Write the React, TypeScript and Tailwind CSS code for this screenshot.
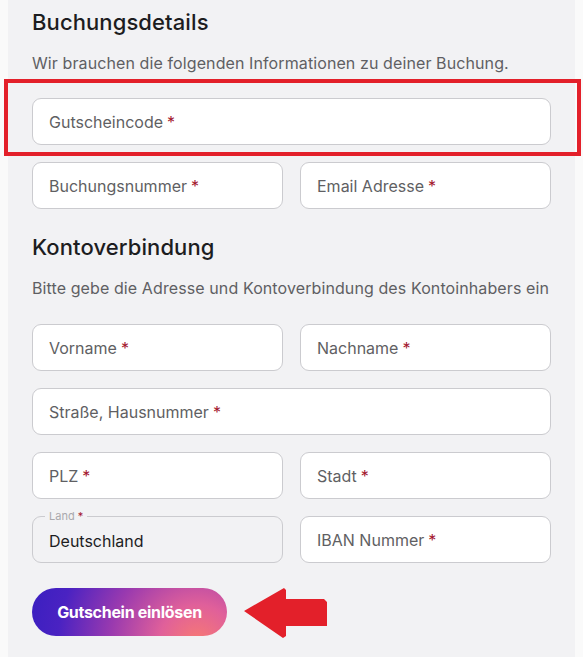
import React from 'react';

const font = { fontFamily: 'Inter, "Noto Sans", sans-serif' };

function Field({ label, className = '' }: { label: string; className?: string }) {
  return (
    <div
      className={`h-[47px] rounded-[9px] border border-[#cbcbcf] bg-white flex items-center px-4 text-[16px] text-[#5f5f63] ${className}`}
    >
      {label}
      <span className="ml-1 text-[#a3162e]">*</span>
    </div>
  );
}

function CountryField() {
  return (
    <div className="relative h-[47px] rounded-[9px] border border-[#cbcbcf] bg-[#f2f2f4] flex items-center px-4 text-[16px] text-[#1d1d1f]">
      {/* floating label that cuts the border */}
      <span className="absolute -top-[8px] left-[12px] bg-[#f2f2f4] px-1 text-[11px] leading-[14px] text-[#a9a9ad]">
        Land <span className="text-[#a3162e]">*</span>
      </span>
      <span className="pt-[2px]">Deutschland</span>
    </div>
  );
}

export default function App() {
  return (
    <div className="min-h-[657px] w-[583px] bg-[#fafafa] px-2" style={font}>
      <div className="bg-[#f2f2f4] min-h-[657px] px-6 pt-[7px]">
        {/* Buchungsdetails */}
        <h2 className="text-[22px] leading-[30px] font-medium text-[#1d1d1f] tracking-[0.1px]">
          Buchungsdetails
        </h2>
        <p className="mt-[16px] text-[16px] leading-[20px] text-[#5f5f63] tracking-[0.1px]">
          Wir brauchen die folgenden Informationen zu deiner Buchung.
        </p>

        <div className="relative mt-[25px]">
          <Field label="Gutscheincode" />
          {/* annotation frame */}
          <div className="pointer-events-none absolute -top-[19px] -left-[28px] -right-[30px] -bottom-[11px] border-4 border-[#e3202a]" />
        </div>

        <div className="mt-[17px] grid grid-cols-2 gap-[17px]">
          <Field label="Buchungsnummer" />
          <Field label="Email Adresse" />
        </div>

        {/* Kontoverbindung */}
        <h2 className="mt-[23px] text-[22px] leading-[30px] font-medium text-[#1d1d1f] tracking-[0.1px]">
          Kontoverbindung
        </h2>
        <p className="mt-[16px] text-[16px] leading-[20px] text-[#5f5f63] tracking-[0.1px]">
          Bitte gebe die Adresse und Kontoverbindung des Kontoinhabers ein
        </p>

        <div className="mt-[26px] flex flex-col gap-[17px]">
          <div className="grid grid-cols-2 gap-[17px]">
            <Field label="Vorname" />
            <Field label="Nachname" />
          </div>
          <Field label="Straße, Hausnummer" />
          <div className="grid grid-cols-2 gap-[17px]">
            <Field label="PLZ" />
            <Field label="Stadt" />
          </div>
          <div className="grid grid-cols-2 gap-[17px]">
            <CountryField />
            <Field label="IBAN Nummer" />
          </div>
        </div>

        <div className="mt-[22px] flex items-center gap-[18px]">
          <button className="h-[48px] w-[195px] rounded-full text-white text-[16px] font-bold tracking-[-0.3px] bg-[radial-gradient(circle_at_85%_115%,#f87a72_0%,#e0609a_22%,#9a3aaf_50%,#4a22c2_80%,#3a1fc0_100%)]">
            Gutschein einlösen
          </button>
          <svg width="84" height="52" viewBox="0 0 84 52" className="mt-[2px] -ml-[2px]">
            <path d="M1 24 L41 1 L43 3 L43 12 L81 12 L84 15 L84 39 L43 39 L43 49 L40 51 Z" fill="#e3202a" />
          </svg>
        </div>
      </div>
    </div>
  );
}
